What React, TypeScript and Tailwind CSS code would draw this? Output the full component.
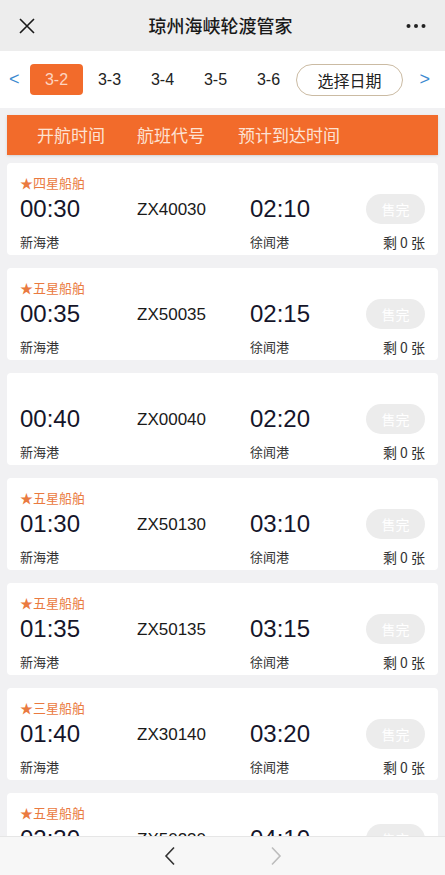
import React from "react";

type Trip = {
  grade: string;
  dep: string;
  code: string;
  arr: string;
};

const trips: Trip[] = [
  { grade: "★四星船舶", dep: "00:30", code: "ZX40030", arr: "02:10" },
  { grade: "★五星船舶", dep: "00:35", code: "ZX50035", arr: "02:15" },
  { grade: "", dep: "00:40", code: "ZX00040", arr: "02:20" },
  { grade: "★五星船舶", dep: "01:30", code: "ZX50130", arr: "03:10" },
  { grade: "★五星船舶", dep: "01:35", code: "ZX50135", arr: "03:15" },
  { grade: "★三星船舶", dep: "01:40", code: "ZX30140", arr: "03:20" },
  { grade: "★五星船舶", dep: "02:30", code: "ZX50230", arr: "04:10" },
];

const dates = ["3-3", "3-4", "3-5", "3-6"];

const cjk = "font-['Noto_Sans_CJK_SC',sans-serif]";
const num = "font-['Liberation_Sans','Noto_Sans_CJK_SC',sans-serif]";

const TripCard: React.FC<{ trip: Trip }> = ({ trip }) => {
  return (
    <div className="shrink-0 h-[92px] bg-white rounded-[4px] px-[13px] pt-[10px] flex flex-col">
      <div className={`h-[20px] leading-[20px] text-[13px] text-[#ea7a40] ${cjk}`}>{trip.grade}</div>
      <div className="h-[32px] flex items-center">
        <div className={`w-[117px] text-[24px] leading-none text-[#15152a] ${num}`}>{trip.dep}</div>
        <div className={`w-[113px] text-[17px] leading-none text-[#1a1a1a] ${num}`}>{trip.code}</div>
        <div className={`flex-1 text-[24px] leading-none text-[#15152a] ${num}`}>{trip.arr}</div>
        <div className={`w-[59px] h-[30px] rounded-full bg-[#ececec] text-white text-[14px] flex items-center justify-center ${cjk}`}>
          售完
        </div>
      </div>
      <div className={`mt-[7px] h-[20px] flex items-center text-[13px] text-[#333] ${cjk}`}>
        <div className="w-[230px]">新海港</div>
        <div className="flex-1">徐闻港</div>
        <div className={`text-[14px] text-[#333] ${cjk}`}>剩 0 张</div>
      </div>
    </div>
  );
};

export default function App() {
  return (
    <div className="w-[445px] h-[875px] flex flex-col overflow-hidden bg-[#f1f1f3]">
      {/* top bar */}
      <div className="h-[51px] shrink-0 bg-[#ededed] flex items-center px-[19px]">
        <svg width="16" height="16" viewBox="0 0 16 16" className="shrink-0">
          <path d="M1 1 L15 15 M15 1 L1 15" stroke="#1a1a1a" strokeWidth="1.6" fill="none" />
        </svg>
        <div className={`flex-1 text-center text-[18px] font-medium text-[#1a1a1a] ${cjk}`}>琼州海峡轮渡管家</div>
        <svg width="20" height="6" viewBox="0 0 20 6" className="shrink-0">
          <circle cx="2.5" cy="3" r="2" fill="#222" />
          <circle cx="10" cy="3" r="2" fill="#222" />
          <circle cx="17.5" cy="3" r="2" fill="#222" />
        </svg>
      </div>

      {/* date selector */}
      <div className="h-[57px] shrink-0 bg-white flex items-center pl-[9px] pr-[9px]">
        <span className={`w-[21px] text-[18px] text-[#3b8ad0] ${num}`}>&lt;</span>
        <div className={`w-[53px] h-[31px] rounded-[4px] bg-[#f26b2b] text-[#fdd4c0] text-[16px] flex items-center justify-center ${num}`}>
          3-2
        </div>
        {dates.map((d) => (
          <div key={d} className={`w-[53px] text-center text-[16px] text-[#222] ${num}`}>
            {d}
          </div>
        ))}
        <div className={`ml-[1px] w-[107px] h-[32px] rounded-full border border-[#cbbba3] flex items-center justify-center text-[16px] text-[#222] ${cjk}`}>
          选择日期
        </div>
        <span className={`flex-1 text-right pr-[6px] text-[18px] text-[#3b8ad0] ${num}`}>&gt;</span>
      </div>

      {/* list */}
      <div className="flex-1 overflow-hidden px-[7px] pt-[7px] flex flex-col gap-[13px]">
        <div className="shrink-0 h-[40px] bg-[#f26b2b] shadow-sm flex items-center text-[17px] text-[#fde2d3]">
          <div className={`w-[130px] pl-[30px] ${cjk}`}>开航时间</div>
          <div className={`w-[101px] ${cjk}`}>航班代号</div>
          <div className={`${cjk}`}>预计到达时间</div>
        </div>
        <div className="-mt-[5px] flex flex-col gap-[13px]">
          {trips.map((t) => (
            <TripCard key={t.code} trip={t} />
          ))}
        </div>
      </div>

      {/* bottom nav */}
      <div className="h-[39px] shrink-0 bg-[#f7f7f7] border-t border-[#e6e6e6] flex items-center justify-center gap-[94px]">
        <svg width="12" height="20" viewBox="0 0 12 20">
          <path d="M10 1.5 L2 10 L10 18.5" stroke="#333" strokeWidth="1.6" fill="none" />
        </svg>
        <svg width="12" height="20" viewBox="0 0 12 20">
          <path d="M2 1.5 L10 10 L2 18.5" stroke="#bdbdbd" strokeWidth="1.6" fill="none" />
        </svg>
      </div>
    </div>
  );
}
